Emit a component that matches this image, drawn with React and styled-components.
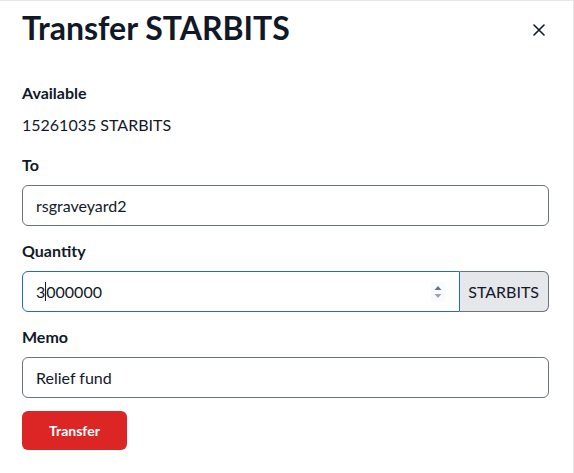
import React from 'react';
import styled, { createGlobalStyle } from 'styled-components';

const GlobalStyle = createGlobalStyle`
  body {
    margin: 0;
    background: #ffffff;
    font-family: Lato, "Noto Sans", sans-serif;
    color: #111827;
  }
`;

const CloseIcon = () => (
  <svg width="12" height="12" viewBox="0 0 12 12" fill="none">
    <path d="M1 1L11 11M11 1L1 11" stroke="#111827" strokeWidth="1.6" strokeLinecap="round" />
  </svg>
);

const SpinIcon = () => (
  <svg width="14" height="20" viewBox="0 0 14 20">
    <rect width="14" height="20" fill="#f9fafb" />
    <path d="M3.5 8L7 4L10.5 8Z" fill="#6b7280" />
    <path d="M3.5 12L7 16L10.5 12Z" fill="#9ca3af" />
  </svg>
);

const App = () => (
  <>
    <GlobalStyle />
    <Modal>
      <Header>
        <Title>Transfer STARBITS</Title>
        <CloseButton aria-label="Close">
          <CloseIcon />
        </CloseButton>
      </Header>

      <Group>
        <Label>Available</Label>
        <Text>15261035 STARBITS</Text>
      </Group>

      <Group>
        <Label>To</Label>
        <Field>rsgraveyard2</Field>
      </Group>

      <Group>
        <Label>Quantity</Label>
        <InputGroup>
          <Field focused joined>
            <Value>
              3<Caret />000000
            </Value>
            <SpinIcon />
          </Field>
          <Addon>STARBITS</Addon>
        </InputGroup>
      </Group>

      <Group>
        <Label>Memo</Label>
        <Field>Relief fund</Field>
      </Group>

      <SubmitButton>Transfer</SubmitButton>
    </Modal>
  </>
);

export default App;

const Modal = styled.div`
  box-sizing: border-box;
  width: 574px;
  height: 473px;
  border-top: 1px solid #e5e7eb;
  border-right: 1px solid #e5e7eb;
  padding: 7px 24px 0 22px;
  display: flex;
  flex-direction: column;
`;

const Header = styled.div`
  display: flex;
  align-items: center;
  justify-content: space-between;
  margin-bottom: 33px;
`;

const Title = styled.h1`
  margin: 0;
  font-size: 32px;
  line-height: 40px;
  font-weight: 700;
  color: #111827;
`;

const CloseButton = styled.button`
  border: none;
  background: none;
  padding: 0 4px 0 6px;
  margin-top: 3px;
  display: flex;
  align-items: center;
  cursor: pointer;
`;

const Group = styled.div`
  display: flex;
  flex-direction: column;
  gap: 8px;
  margin-bottom: 13px;
`;

const Label = styled.div`
  font-size: 16px;
  line-height: 24px;
  font-weight: 700;
  color: #111827;
`;

const Text = styled.div`
  font-size: 16px;
  line-height: 24px;
  color: #111827;
  margin-bottom: 3px;
`;

const Field = styled.div`
  box-sizing: border-box;
  flex: ${({ joined }) => (joined ? '1' : 'none')};
  height: 41px;
  display: flex;
  align-items: center;
  justify-content: space-between;
  padding: 0 ${({ joined }) => (joined ? '14px' : '11px')} 0 13px;
  font-size: 16px;
  color: #111827;
  border: 1px solid ${({ focused }) => (focused ? '#2563eb' : '#6b7280')};
  border-radius: ${({ joined }) => (joined ? '6px 0 0 6px' : '6px')};
`;

const Value = styled.span`
  display: inline-flex;
  align-items: center;
`;

const Caret = styled.span`
  display: inline-block;
  width: 1px;
  height: 19px;
  background: #111827;
`;

const InputGroup = styled.div`
  display: flex;
`;

const Addon = styled.div`
  box-sizing: border-box;
  height: 41px;
  display: flex;
  align-items: center;
  padding: 0 9px 0 8px;
  font-size: 16px;
  color: #111827;
  background: #e5e7eb;
  border: 1px solid #6b7280;
  border-left: none;
  border-radius: 0 6px 6px 0;
`;

const SubmitButton = styled.button`
  align-self: flex-start;
  margin-top: 0;
  width: 105px;
  height: 39px;
  border: none;
  border-radius: 6px;
  background: #dc2626;
  color: #ffffff;
  font-family: Lato, "Noto Sans", sans-serif;
  font-size: 14px;
  font-weight: 700;
  cursor: pointer;
`;
